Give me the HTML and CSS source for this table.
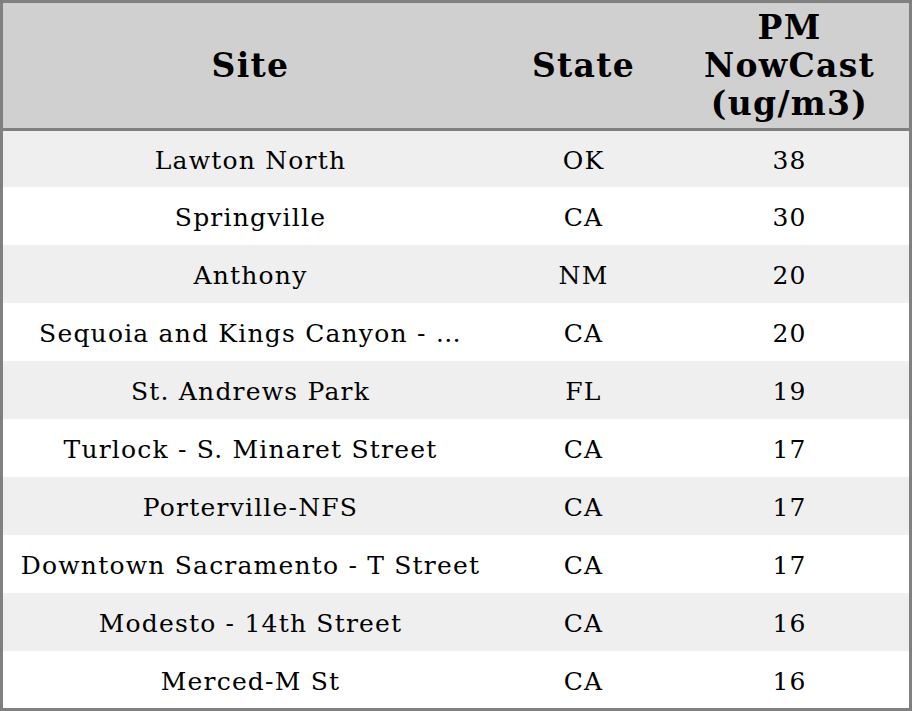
FILE: index.html
```html
<!DOCTYPE html>
<html>
<head>
<meta charset="utf-8">
<link rel="stylesheet" href="styles.css">
</head>
<body>
<div class="frame">
<table class="grid">
  <colgroup>
    <col class="c-site">
    <col class="c-state">
    <col class="c-pm">
  </colgroup>
  <thead>
    <tr class="head">
      <th>Site</th>
      <th>State</th>
      <th>PM<br>NowCast<br>(ug/m3)</th>
    </tr>
  </thead>
  <tbody>
    <tr class="row odd first"><td>Lawton North</td><td>OK</td><td>38</td></tr>
    <tr class="row"><td>Springville</td><td>CA</td><td>30</td></tr>
    <tr class="row odd"><td>Anthony</td><td>NM</td><td>20</td></tr>
    <tr class="row"><td>Sequoia and Kings Canyon - …</td><td>CA</td><td>20</td></tr>
    <tr class="row odd"><td>St. Andrews Park</td><td>FL</td><td>19</td></tr>
    <tr class="row"><td>Turlock - S. Minaret Street</td><td>CA</td><td>17</td></tr>
    <tr class="row odd"><td>Porterville-NFS</td><td>CA</td><td>17</td></tr>
    <tr class="row"><td>Downtown Sacramento - T Street</td><td>CA</td><td>17</td></tr>
    <tr class="row odd"><td>Modesto - 14th Street</td><td>CA</td><td>16</td></tr>
    <tr class="row"><td>Merced-M St</td><td>CA</td><td>16</td></tr>
  </tbody>
</table>
</div>
</body>
</html>
```

FILE: styles.css
```css
html, body {
  margin: 0;
  padding: 0;
  background: #ffffff;
}
.frame {
  width: 912px;
  height: 711px;
  box-sizing: border-box;
  border: 3px solid #808080;
  overflow: hidden;
}
.grid {
  width: 906px;
  border-collapse: separate;
  border-spacing: 0;
  table-layout: fixed;
  font-family: "DejaVu Serif", serif;
  color: #000;
}
.c-site { width: 494px; }
.c-state { width: 172px; }
.c-pm { width: 240px; }
.head th {
  background: #d0d0d0;
  height: 128px;
  box-sizing: border-box;
  padding: 0 0 0 1px;
  font-size: 33px;
  font-weight: bold;
  letter-spacing: 1.3px;
  line-height: 38px;
  text-align: center;
  vertical-align: middle;
  border-bottom: 3px solid #808080;
}
.row td {
  height: 58px;
  padding: 2px 0 0 1px;
  box-sizing: border-box;
  font-size: 25px;
  letter-spacing: 1.2px;
  text-align: center;
  vertical-align: middle;
  white-space: nowrap;
  overflow: hidden;
}
.row.first td { height: 56px; }
.row.odd td { background: #efefef; }
```
